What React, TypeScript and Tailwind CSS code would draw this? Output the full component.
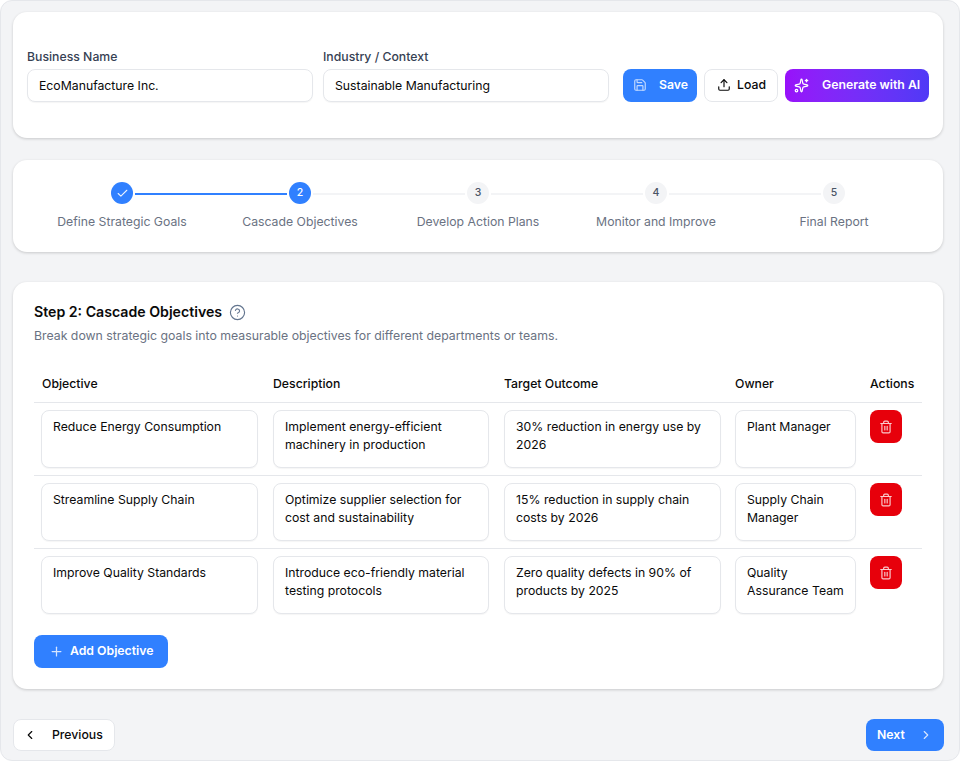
import { Check, ChevronLeft, ChevronRight, CircleHelp, Plus, Save, Sparkles, Trash2, Upload } from "lucide-react";

const steps = ["Define Strategic Goals", "Cascade Objectives", "Develop Action Plans", "Monitor and Improve", "Final Report"];
const rows = [
  ["Reduce Energy Consumption", "Implement energy-efficient machinery in production", "30% reduction in energy use by 2026", "Plant Manager"],
  ["Streamline Supply Chain", "Optimize supplier selection for cost and sustainability", "15% reduction in supply chain costs by 2026", "Supply Chain Manager"],
  ["Improve Quality Standards", "Introduce eco-friendly material testing protocols", "Zero quality defects in 90% of products by 2025", "Quality Assurance Team"],
];
const gridCols = "grid grid-cols-[231px_231px_231px_136px_59px]";
const cardClass = "bg-white rounded-[14px] shadow-[0_1px_3px_rgba(0,0,0,0.18)]";

function Field({ label, value }: { label: string; value: string }) {
  return (
    <div className="w-[286px] flex flex-col">
      <label className="text-[12.25px] leading-[16px] font-medium text-[#364153] mb-[4px]">{label}</label>
      <input
        readOnly
        value={value}
        className="h-[33px] px-[11px] text-[12.25px] text-[#0a0a0a] bg-white border border-[#e5e7eb] rounded-[8px] shadow-[0_1px_1px_rgba(0,0,0,0.04)] outline-none"
      />
    </div>
  );
}

export default function App() {
  return (
    <div className="h-[761px] bg-[#f3f4f6] border border-[#e5e7eb] rounded-[12px] pl-[12px] pr-[16px] pt-[11px] font-['Inter',sans-serif] overflow-hidden">
      <div className={`${cardClass} h-[126px] px-[14px] flex items-center`}>
        <div className="flex items-end w-full">
          <Field label="Business Name" value="EcoManufacture Inc." />
          <div className="w-[10px]" />
          <Field label="Industry / Context" value="Sustainable Manufacturing" />
          <button className="ml-[14px] w-[74px] h-[33px] rounded-[8px] bg-[#3080ff] text-white text-[12.25px] font-semibold flex items-center pl-[10px]">
            <Save size={14} strokeWidth={2} className="opacity-70 mr-[12px]" />
            Save
          </button>
          <button className="ml-[7px] w-[74px] h-[33px] rounded-[8px] bg-white border border-[#e5e7eb] text-[#0a0a0a] text-[12.25px] font-medium flex items-center pl-[12px]">
            <Upload size={14} strokeWidth={2} className="mr-[6px]" />
            Load
          </button>
          <button className="ml-[7px] w-[144px] h-[33px] rounded-[8px] bg-gradient-to-r from-[#9810fa] to-[#4f39f6] text-white text-[12.25px] font-semibold flex items-center pl-[9px]">
            <Sparkles size={15} strokeWidth={2} className="mr-[13px]" />
            Generate with AI
          </button>
        </div>
      </div>

      <div className={`${cardClass} h-[92px] mt-[22px] pl-[20px] pt-[22px]`}>
        <div className="grid grid-cols-[repeat(5,178px)]">
          {steps.map((s, i) => (
            <div key={s} className="relative flex flex-col items-center">
              {i < 4 && (
                <div className={`absolute top-[11px] left-[102px] w-[152px] h-[2px] ${i === 0 ? "bg-[#3080ff]" : "bg-[#f3f4f6]"}`} />
              )}
              <div
                className={`w-[22px] h-[22px] rounded-full flex items-center justify-center text-[10.5px] font-medium ${
                  i < 2 ? "bg-[#3080ff] text-white" : "bg-[#f3f4f6] text-[#4a5565]"
                }`}
              >
                {i === 0 ? <Check size={13} strokeWidth={2} className="opacity-90" /> : i + 1}
              </div>
              <div className="mt-[10px] text-[12.25px] leading-[16px] text-[#6a7282] whitespace-nowrap">{s}</div>
            </div>
          ))}
        </div>
      </div>

      <div className={`${cardClass} h-[407px] mt-[30px] px-[21px] pt-[20px]`}>
        <div className="flex items-center h-[20px]">
          <h2 className="text-[14.15px] font-semibold text-[#0a0a0a]">Step 2: Cascade Objectives</h2>
          <CircleHelp size={17} strokeWidth={1.6} className="ml-[7px] text-[#62748e]" />
        </div>
        <p className="mt-[6px] text-[12.3px] leading-[16px] text-[#6a7282]">
          Break down strategic goals into measurable objectives for different departments or teams.
        </p>

        <div className={`${gridCols} w-[888px] mt-[24px] h-[35px] pb-[2px] items-center text-[12.25px] font-medium text-[#0a0a0a] border-b border-[#e5e7eb]`}>
          <div className="pl-[8px]">Objective</div>
          <div className="pl-[8px]">Description</div>
          <div className="pl-[8px]">Target Outcome</div>
          <div className="pl-[8px]">Owner</div>
          <div className="pl-[7px]">Actions</div>
        </div>
        {rows.map((r, ri) => (
          <div key={ri} className={`${gridCols} w-[888px] h-[73px] pt-[7px] ${ri < 2 ? "border-b border-[#e5e7eb]" : ""}`}>
            {r.map((v, ci) => (
              <div key={ci} className={ci === 0 ? "px-[7px]" : ci === 2 ? "pl-[8px] pr-[6px]" : "pl-[8px] pr-[7px]"}>
                <textarea
                  readOnly
                  defaultValue={v}
                  className="block w-full h-[58px] resize-none overflow-hidden px-[11px] py-[7px] text-[12.25px] leading-[18px] text-[#0a0a0a] bg-white border border-[#e5e7eb] rounded-[8px] shadow-[0_1px_1px_rgba(0,0,0,0.04)] outline-none"
                />
              </div>
            ))}
            <div className="pl-[7px]">
              <button className="w-[32px] h-[33px] rounded-[8px] bg-[#e7000b] text-white flex items-center justify-center">
                <Trash2 size={14} strokeWidth={2} className="opacity-80" />
              </button>
            </div>
          </div>
        ))}

        <button className="mt-[13px] w-[134px] h-[33px] rounded-[8px] bg-[#3080ff] text-white text-[12.25px] font-semibold flex items-center pl-[15px]">
          <Plus size={15} strokeWidth={2} className="opacity-80 mr-[6px]" />
          Add Objective
        </button>
      </div>

      <div className="mt-[30px] flex items-center justify-between">
        <button className="w-[102px] h-[32px] rounded-[8px] bg-white border border-[#e5e7eb] text-[#0a0a0a] text-[12.25px] font-medium flex items-center pl-[9px]">
          <ChevronLeft size={14} strokeWidth={2} className="mr-[15px]" />
          Previous
        </button>
        <button className="mr-[-1px] w-[78px] h-[32px] rounded-[8px] bg-[#3080ff] text-white text-[12.25px] font-semibold flex items-center pl-[11px]">
          Next
          <ChevronRight size={14} strokeWidth={2} className="opacity-80 ml-[14px]" />
        </button>
      </div>
    </div>
  );
}
